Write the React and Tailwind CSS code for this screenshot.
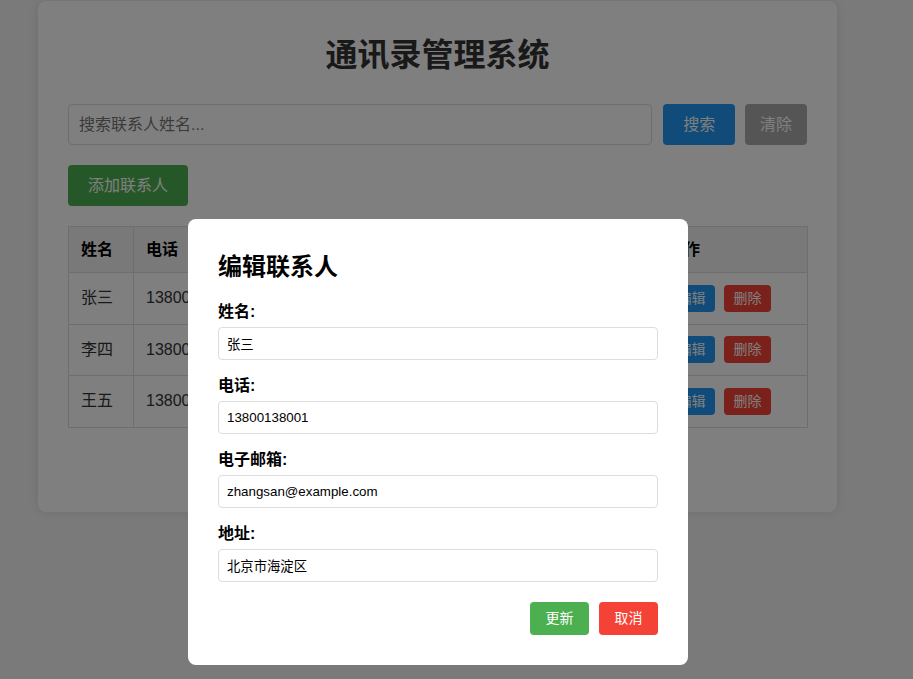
import React from 'react';

const FONT = { fontFamily: '"Liberation Sans", Arial, "Noto Sans CJK SC", sans-serif' };

const CONTACTS = [
  { name: '张三', phone: '13800138001', email: 'zhangsan@example.com', address: '北京市海淀区' },
  { name: '李四', phone: '13800138002', email: 'lisi@example.com', address: '上海市浦东新区' },
  { name: '王五', phone: '13800138003', email: 'wangwu@example.com', address: '广州市天河区' },
];

function Field({ label, value }) {
  return (
    <div className="mb-[16px]">
      <label className="block text-[16px] leading-[20px] font-bold text-black mb-[5px]">{label}</label>
      <input
        readOnly
        value={value}
        className="block w-full h-[33px] px-[8px] border border-[#ddd] rounded-[4px] text-[13.33px] text-black bg-white outline-none"
      />
    </div>
  );
}

export default function App() {
  return (
    <div className="min-h-screen bg-[#f4f4f4] pt-[1px]" style={FONT}>
      {/* Main card */}
      <div className="ml-[38px] w-[799px] bg-white rounded-[8px] shadow-[0_0_10px_rgba(0,0,0,0.1)] px-[30px] pt-[34px] pb-[84px]">
        <h1 className="text-center text-[32px] leading-[40px] font-bold text-[#333] mb-[29px]">通讯录管理系统</h1>

        {/* Search */}
        <div className="flex items-center">
          <input
            placeholder="搜索联系人姓名..."
            className="w-[586px] h-[41px] px-[10px] border border-[#ddd] rounded-[4px] text-[16px] outline-none placeholder:text-[#757575]"
          />
          <button className="ml-[11px] w-[72px] h-[41px] bg-[#2196F3] text-white text-[16px] rounded-[4px]">搜索</button>
          <button className="ml-[10px] w-[62px] h-[41px] bg-[#aaaaaa] text-white text-[16px] rounded-[4px]">清除</button>
        </div>

        <button className="mt-[20px] w-[120px] h-[41px] bg-[#4CAF50] text-white text-[16px] rounded-[4px]">添加联系人</button>

        {/* Table */}
        <table className="mt-[20px] w-[739px] table-fixed border-collapse text-[16px] text-[#333]">
          <thead>
            <tr className="bg-[#f2f2f2]">
              <th className="w-[65px] h-[46px] px-[12px] text-left font-bold text-black border border-[#ddd]">姓名</th>
              <th className="w-[130px] px-[12px] text-left font-bold text-black border border-[#ddd]">电话</th>
              <th className="w-[220px] px-[12px] text-left font-bold text-black border border-[#ddd]">电子邮箱</th>
              <th className="w-[172px] px-[12px] text-left font-bold text-black border border-[#ddd]">地址</th>
              <th className="w-[152px] px-[12px] text-left font-bold text-black border border-[#ddd]">操作</th>
            </tr>
          </thead>
          <tbody>
            {CONTACTS.map((c) => (
              <tr key={c.name}>
                <td className="h-[51.5px] px-[12px] border border-[#ddd]">{c.name}</td>
                <td className="px-[12px] border border-[#ddd]">{c.phone}</td>
                <td className="px-[12px] border border-[#ddd]">{c.email}</td>
                <td className="px-[12px] border border-[#ddd]">{c.address}</td>
                <td className="px-[12px] border border-[#ddd]">
                  <div className="flex gap-[9px]">
                    <button className="w-[47px] h-[27px] bg-[#2196F3] text-white text-[14px] rounded-[4px]">编辑</button>
                    <button className="w-[47px] h-[27px] bg-[#f44336] text-white text-[14px] rounded-[4px]">删除</button>
                  </div>
                </td>
              </tr>
            ))}
          </tbody>
        </table>
      </div>

      {/* Modal overlay */}
      <div className="fixed inset-0 bg-black/50 pl-[188px] pt-[219px]">
        <div className="w-[500px] bg-white rounded-[8px] px-[30px] pt-[30px] pb-[30px]">
          <h2 className="text-[24px] leading-[36px] font-bold text-black mb-[17px]">编辑联系人</h2>
          <Field label="姓名:" value="张三" />
          <Field label="电话:" value="13800138001" />
          <Field label="电子邮箱:" value="zhangsan@example.com" />
          <Field label="地址:" value="北京市海淀区" />
          <div className="flex justify-end gap-[10px] mt-[20px]">
            <button className="w-[59px] h-[33px] bg-[#4CAF50] text-white text-[14px] rounded-[4px]">更新</button>
            <button className="w-[59px] h-[33px] bg-[#f44336] text-white text-[14px] rounded-[4px]">取消</button>
          </div>
        </div>
      </div>
    </div>
  );
}
